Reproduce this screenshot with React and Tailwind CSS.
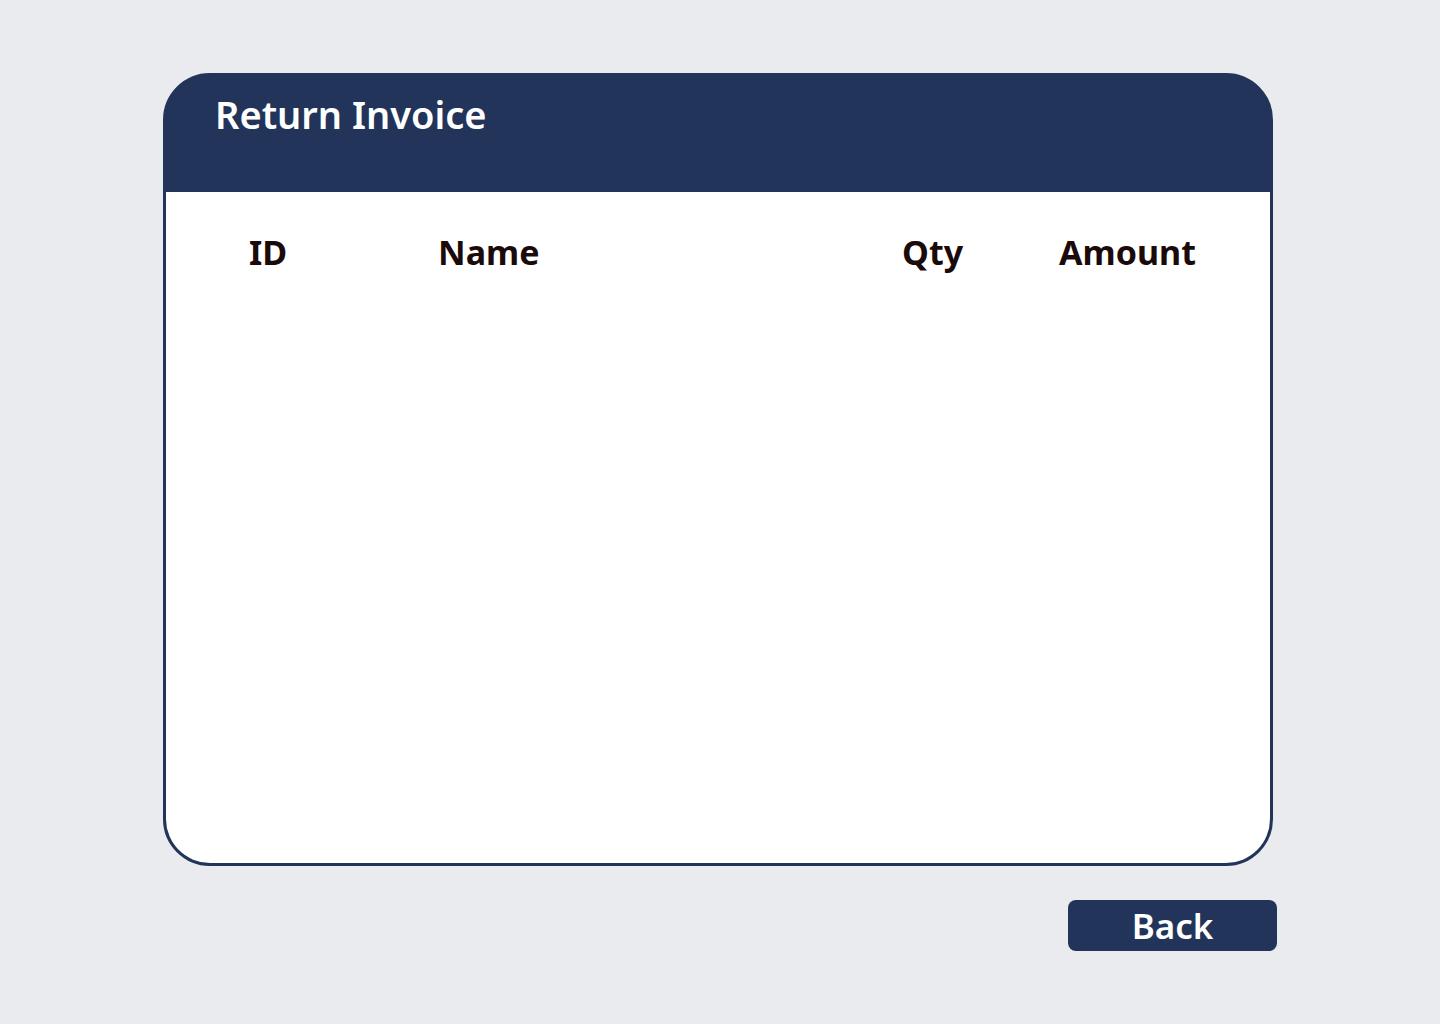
export default function App() {
  const cols = [
    { label: 'ID', className: 'w-[189px]' },
    { label: 'Name', className: 'w-[464px]' },
    { label: 'Qty', className: 'w-[157px]' },
    { label: 'Amount', className: '' },
  ];

  return (
    <div className="min-h-screen w-full bg-[#e9ebef] pt-[73px] pl-[163px]" style={{ fontFamily: '"Noto Sans", "Open Sans", sans-serif' }}>
      <div className="w-[1110px] h-[793px] rounded-[47px] border-[3px] border-[#22345a] bg-[#22345a] overflow-hidden flex flex-col">
        <div className="h-[116px] bg-[#22345a] pl-[49px] pt-[12px]">
          <h1 className="text-[38px] leading-[52px] font-semibold text-white">Return Invoice</h1>
        </div>
        <div className="flex-1 bg-white flex items-start pl-[83px] pt-[36px]">
          {cols.map((c) => (
            <div key={c.label} className={`${c.className} text-[34px] leading-[48px] font-bold text-[#1b0a0a]`}>
              {c.label}
            </div>
          ))}
        </div>
      </div>
      <div className="w-[1114px] flex justify-end mt-[34px]">
        <button className="w-[209px] h-[51px] rounded-[8px] bg-[#22345a] text-white text-[35px] leading-[51px] font-semibold">
          Back
        </button>
      </div>
    </div>
  );
}
